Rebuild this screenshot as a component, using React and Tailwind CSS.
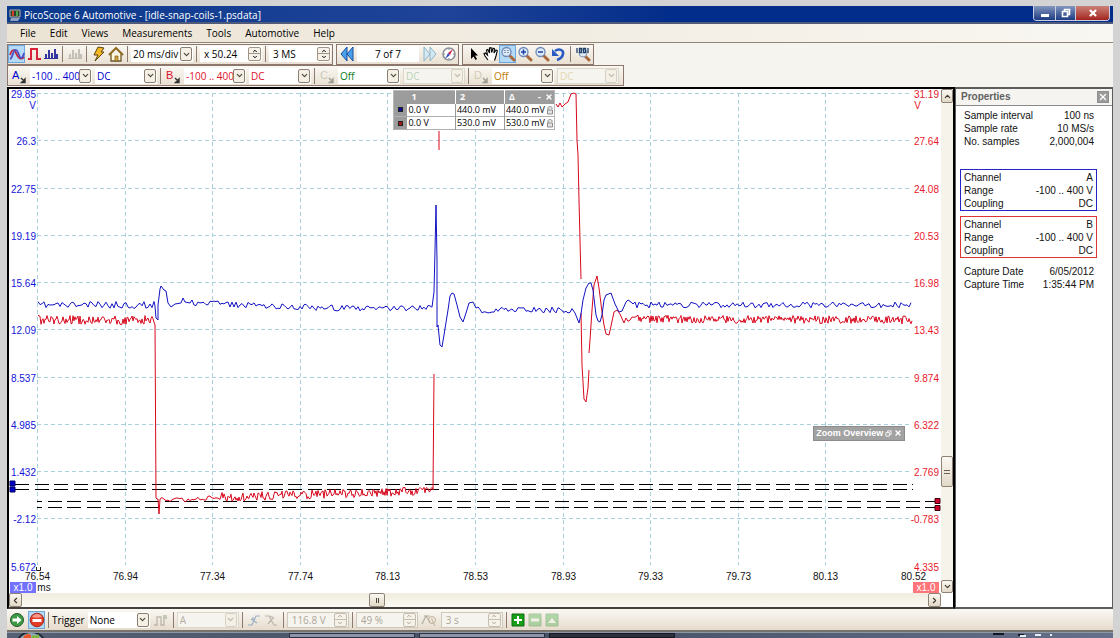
/**
 * PicoScope Automotive main window
 * Toolbars, scope view with two channels, and the properties panel
 */
import { ChevronDown, ChevronLeft, ChevronRight, ChevronUp, X } from 'lucide-react';

const VOLTS_A = ['29.85', '26.3', '22.75', '19.19', '15.64', '12.09', '8.537', '4.985', '1.432', '-2.12', '5.672'];
const VOLTS_B = ['31.19', '27.64', '24.08', '20.53', '16.98', '13.43', '9.874', '6.322', '2.769', '-0.783', '4.335'];
const TIMES = ['76.54', '76.94', '77.34', '77.74', '78.13', '78.53', '78.93', '79.33', '79.73', '80.13', '80.52'];

// Deterministic noise, so the traces look the same on each render
const makeNoise = (seed) => {
  let s = seed;
  return () => {
    s = (s * 16807) % 2147483647;
    return s / 2147483647 - 0.5;
  };
};

const noisy = (x1, y1, x2, y2, amp, step, seed) => {
  const rand = makeNoise(seed);
  const points = [];
  for (let x = x1; x <= x2; x += step) {
    const y = y1 + ((y2 - y1) * (x - x1)) / (x2 - x1);
    points.push(`${x},${(y + rand() * amp).toFixed(1)}`);
  }
  return points.join(' ');
};

const TRACE_A = [
  noisy(38, 305, 154, 305, 7, 2, 11),
  '155,306 156,318 158,320 158,305 160,289 161,286 164,290 166,291 168,303 171,307 175,304 181,303 183,298 185,302 190,303',
  noisy(192, 303, 330, 308, 6, 2, 29),
  noisy(332, 308, 432, 308, 6, 2, 37),
  '434,292 435,250 436,205 437,260 437,327 438,325 440,345 442,347 444,335 448,310 450,296 452,293 454,294 457,305 460,317 463,322 466,313 469,303 473,302 476,308',
  noisy(478, 310, 572, 310, 6, 2, 41),
  '575,313 579,323 581,314 583,300 586,288 589,283 591,283 593,290 596,315 598,321 600,322 602,315 604,300 606,295 611,293 615,304 619,312 622,311 626,302 628,300 631,302 633,304',
  noisy(635, 305, 912, 305, 6, 2, 53),
].join(' ');

const TRACES_B = [
  [noisy(38, 320, 154, 320, 9, 1, 61), '155,325 156,498 157,499 158,499 159,514 160,499', noisy(162, 500, 220, 498, 5, 2, 71), noisy(222, 497, 432, 491, 9, 1, 73), '433,490 434,374'].join(' '),
  '439,131 439,150',
  '556,104 558,107 560,103 562,107 565,104 568,102 571,94 574,93 576,94 577,140 578,155 579,200 580,240 581,279',
  '581,313 582,365 584,399 586,402 588,388 589,370',
  ['589,353 590,340 592,310 594,285 597,276 599,288 602,312 604,325 606,334 609,335 611,326 614,312 617,310 620,314 624,323', noisy(626, 320, 636, 318, 4, 2, 83), noisy(638, 319, 912, 320, 8, 1, 89)].join(' '),
];

/* ---------- Icons ---------- */

const Icon = ({ children, className = '' }) => (
  <svg viewBox="0 0 16 16" className={`size-4 shrink-0 ${className}`} fill="none" aria-hidden="true">
    {children}
  </svg>
);

const WaveIcon = () => (
  <Icon>
    <path d="M1 9C3 3 5 3 7 7s4 8 8 4" stroke="#c22643" strokeWidth="1.8" />
    <path d="M1 13c3-1 3-10 6-9s3 8 5 8 2-2 3-5" stroke="#4a52c8" strokeWidth="1.8" />
  </Icon>
);

const PulseIcon = () => (
  <Icon>
    <path d="M2 13h3V3h6v10h4" stroke="#d8233a" strokeWidth="2" />
  </Icon>
);

const BarsIcon = ({ color }) => (
  <Icon>
    <path d="M1 12.500h14" stroke={color} />
    <path d="M3 12V8M6 12V4M9 12V7M12 12V3M14 12V8" stroke={color} strokeWidth="1.9" />
  </Icon>
);

const BoltIcon = () => (
  <Icon>
    <path d="M7 1l6 1-3 4h3L4 15l3-6H3z" fill="#f5b822" stroke="#5b4310" />
  </Icon>
);

const HomeIcon = () => (
  <Icon>
    <path d="M3 8v7h10V8" fill="#fff7dc" stroke="#6d5426" strokeWidth="1.3" />
    <path d="M1 9l7-7 7 7" stroke="#8f6b1f" strokeWidth="2" />
    <path d="M7 10h3v5H7z" fill="#d8a73a" stroke="#6d5426" strokeWidth=".7" />
  </Icon>
);

const RewindIcon = ({ flip, from, edge }) => (
  <Icon className={flip ? 'rotate-180' : ''}>
    <path d="M8 1v14L2 8zM14 1v14L8 8z" fill={from} stroke={edge} />
  </Icon>
);

const CompassIcon = () => (
  <Icon>
    <circle cx="8" cy="8" r="6" fill="#fff" stroke="#8c9099" strokeWidth="1.6" />
    <path d="M12 3L9 9 7 7z" fill="#d32648" />
    <path d="M4 13l3-6 2 2z" fill="#3b55c9" />
    <path d="M8 3v1M8 12v1M3 8h1M12 8h1" stroke="#777" />
  </Icon>
);

const CursorIcon = () => (
  <Icon>
    <path d="M5 2v11l2.500-2.500L9.500 14l1.500-1-2-3.500h3z" fill="#000" />
  </Icon>
);

const HandIcon = () => (
  <Icon>
    <path
      d="M5 14L2 10 1 7.500l1.500-.5L4.500 9 3.500 4l1.300-.6L6.500 7 6.500 2 8 1.700 8.700 6.500 10 2.200l1.400.4L11 7l2-3 1.300.7L13 10l-1.500 4.500"
      fill="#fff"
      stroke="#000"
      strokeWidth="1.1"
    />
  </Icon>
);

const LensIcon = ({ children }) => (
  <Icon>
    <path d="M9 9l5 5" stroke="#a8683c" strokeWidth="3" strokeLinecap="round" />
    <circle cx="6.500" cy="6" r="4.500" fill="#dceaf8" stroke="#7089b5" strokeWidth="1.300" />
    {children}
  </Icon>
);

const UndoIcon = () => (
  <Icon>
    <path d="M4 5c4-3 9-1 8 3-.5 3-3 5-6 6" stroke="#2d5bc4" strokeWidth="2.600" />
    <path d="M1 3v7h7z" fill="#2d5bc4" />
  </Icon>
);

const Zoom100Icon = () => (
  <Icon>
    <path d="M9 9l5 5" stroke="#a8683c" strokeWidth="3" strokeLinecap="round" />
    <circle cx="8" cy="7" r="4" fill="#dfeaf5" stroke="#8196b8" />
    <path d="M2 2v5M4.500 2.500h2v4h-2zM8.500 2.500h2v4h-2zM13 2v5" stroke="#1f3f66" strokeWidth="1.300" />
  </Icon>
);

// Channel letter with the small probe at its foot
const ChannelIcon = ({ letter, color, faded }) => (
  <Icon className={faded ? 'opacity-40' : ''}>
    <text x="1" y="11" fontSize="11" fill={color} fontFamily="Liberation Sans, sans-serif">
      {letter}
    </text>
    <path d="M10 10l4 4M14 11v3.500h-3.500z" stroke="#333" fill="#333" strokeWidth="1.400" />
  </Icon>
);

const EdgeIcon = () => (
  <Icon className="opacity-50">
    <path d="M1 13h3V5h4v8h3V5h3" stroke="#8d8878" strokeWidth="1.300" />
    <path d="M10 3h4v4h-4z" fill="#96a08c" />
  </Icon>
);

const SlopeIcon = ({ falling }) => (
  <Icon className={falling ? 'opacity-50' : 'opacity-70'}>
    {falling ? (
      <path d="M2 4h4l5 9h3M5 12l5-6M7 4l4 2" stroke="#8a8578" strokeWidth="1.200" />
    ) : (
      <path d="M2 13h4l4-9h4M5 7l6 4M7 5v4" stroke="#7796bd" strokeWidth="1.200" />
    )}
  </Icon>
);

const DelayIcon = () => (
  <Icon className="opacity-60">
    <path d="M1 12l4-8 4 6M3 4h6" stroke="#8f8a7a" strokeWidth="1.200" />
    <circle cx="11" cy="8" r="3.500" stroke="#a09070" />
    <path d="M11 6v2l3 6" stroke="#a09070" />
  </Icon>
);

const GoIcon = () => (
  <Icon>
    <circle cx="8" cy="8" r="6.500" fill="#3c9a45" stroke="#24592a" />
    <path d="M3.500 6.500H8V4l4.500 4L8 12V9.500H3.500z" fill="#fff" />
  </Icon>
);

const StopIcon = () => (
  <Icon>
    <circle cx="8" cy="8" r="6.800" fill="#e23a25" stroke="#a62a1c" />
    <path d="M3 5c2-4 8-4 10 0-3 1-7 1-10 0z" fill="#f59a8c" />
    <path d="M3.500 7h9v3h-9z" fill="#fff" />
  </Icon>
);

const GreenBox = ({ faded, children }) => (
  <Icon className={faded ? 'opacity-30' : ''}>
    <path d="M2 2h12v12H2z" fill="#17a017" stroke="#0a6b0f" />
    {children}
  </Icon>
);

/* ---------- Controls ---------- */

const ToolButton = ({ label, active, disabled, children }) => (
  <button
    type="button"
    aria-label={label}
    disabled={disabled}
    className={`flex h-[18px] w-[17px] shrink-0 items-center justify-center ${active ? 'border border-[#6fa9dc] bg-[#b5daf8]' : ''}`}
  >
    {children}
  </button>
);

const Divider = () => <span className="h-4 w-px shrink-0 bg-[#8d7a70]" />;

const Select = ({ label, value, color = 'text-black', disabled }) => (
  <label className={`relative flex h-4 w-[62px] shrink-0 items-center ${disabled ? 'border border-[#ddd8cc] bg-[#f6f4ee]' : 'bg-white'}`}>
    <select
      aria-label={label}
      disabled={disabled}
      className={`h-full w-full appearance-none bg-transparent pl-[2px] outline-none ${color}`}
    >
      <option>{value}</option>
    </select>
    <span
      className={`pointer-events-none absolute right-px flex h-[14px] w-3 items-center justify-center rounded-[2px] border bg-[#f4f0e6] ${disabled ? 'border-[#d6d1c4] text-[#bcb7aa]' : 'border-[#8a7f70] text-[#4a4238]'}`}
    >
      <ChevronDown size={9} strokeWidth={3} />
    </span>
  </label>
);

const Spinner = ({ label, value, disabled }) => (
  <div className={`flex h-4 w-[62px] shrink-0 items-center pr-px ${disabled ? 'border border-[#cfc9bc] bg-[#f6f4ee] text-[#aca79a]' : 'bg-white'}`}>
    <input aria-label={label} defaultValue={value} disabled={disabled} className="w-full min-w-0 bg-transparent pl-1 outline-none" />
    <span className={`flex w-[13px] shrink-0 flex-col divide-y rounded-[2px] border bg-[#f6f2ea] ${disabled ? 'divide-[#c5bfb2] border-[#c5bfb2]' : 'divide-[#a09484] border-[#a09484]'}`}>
      <button type="button" aria-label={`Increase ${label}`} disabled={disabled} className="flex h-[6px] items-center justify-center">
        <ChevronUp size={6} strokeWidth={4} />
      </button>
      <button type="button" aria-label={`Decrease ${label}`} disabled={disabled} className="flex h-[6px] items-center justify-center">
        <ChevronDown size={6} strokeWidth={4} />
      </button>
    </span>
  </div>
);

const ToolGroup = ({ children, className = '' }) => (
  <div className={`flex h-[21px] items-center border border-[#8d766c] bg-gradient-to-b from-[#faf8f3] to-[#e9e0d2] ${className}`}>
    {children}
  </div>
);

const ScrollButton = ({ label, className, children }) => (
  <button
    type="button"
    aria-label={label}
    className={`flex shrink-0 items-center justify-center rounded-[2px] border border-[#8d8274] bg-gradient-to-b from-[#fbf8f2] to-[#e2d9c8] text-[#3c342a] ${className}`}
  >
    {children}
  </button>
);

/* ---------- Title and menu ---------- */

const TitleBar = () => (
  <header className="flex h-[18px] items-start border-b-2 border-[#4f5b78] bg-gradient-to-r from-[#0a3a8c] via-[#1e4398] via-40% to-[#032d8a] to-60% text-white">
    <svg viewBox="0 0 12 12" className="mt-[3px] ml-[2px] size-3" aria-hidden="true">
      <path d="M1 1h10v7H1z" fill="#28422f" stroke="#b8b2b0" />
      <path d="M3 2h2v5H3z" fill="#d83a2e" />
      <path d="M7 2h2v5H7z" fill="#4ea64a" />
      <path d="M2 9h9l-2 3H1z" fill="#8fa2bd" />
    </svg>
    <h1 className="ml-[3px] text-[10px] leading-[18px] font-medium">PicoScope 6 Automotive - [idle-snap-coils-1.psdata]</h1>
    <div className="mr-[3px] ml-auto flex h-[15px] overflow-hidden rounded-b-[4px] border border-t-0 border-[#c8d0e0]">
      <button type="button" aria-label="Minimize" className="flex w-[22px] items-end justify-center border-r border-[#c8d0e0] bg-gradient-to-b from-[#8496bd] to-[#1f3b83] pb-[3px]">
        <span className="h-[3px] w-2 bg-white" />
      </button>
      <button type="button" aria-label="Restore" className="flex w-5 items-center justify-center border-r border-[#c8d0e0] bg-gradient-to-b from-[#8496bd] to-[#1f3b83]">
        <svg viewBox="0 0 10 10" className="size-[10px]" aria-hidden="true">
          <path d="M3.500 3V1.500h5v5H7M1.500 3.500h5v5h-5z" fill="none" stroke="#fff" strokeWidth="1.600" />
        </svg>
      </button>
      <button type="button" aria-label="Close" className="flex w-[33px] items-center justify-center bg-gradient-to-b from-[#c98078] to-[#a3201d]">
        <X size={10} strokeWidth={5} />
      </button>
    </div>
  </header>
);

const MenuBar = () => (
  <nav className="flex h-[19px] items-center gap-[14px] border-b border-[#8f8478] bg-gradient-to-r from-[#ebe3d4] to-[#f9f7f2] pl-[13px]">
    {['File', 'Edit', 'Views', 'Measurements', 'Tools', 'Automotive', 'Help'].map((item) => (
      <button key={item} type="button">
        {item}
      </button>
    ))}
  </nav>
);

/* ---------- Toolbars ---------- */

const MainToolbar = () => (
  <div className="flex h-[22px] items-center gap-[3px]">
    <ToolGroup className="gap-[3px] pr-px">
      <div className="flex">
        <ToolButton label="Scope mode" active><WaveIcon /></ToolButton>
        <ToolButton label="Persistence mode"><PulseIcon /></ToolButton>
        <ToolButton label="Spectrum mode"><BarsIcon color="#2c2f9c" /></ToolButton>
      </div>
      <Divider />
      <ToolButton label="Auto setup" disabled><BarsIcon color="#c2bdb6" /></ToolButton>
      <Divider />
      <div className="flex">
        <ToolButton label="Automatic"><BoltIcon /></ToolButton>
        <ToolButton label="Home"><HomeIcon /></ToolButton>
      </div>
      <Divider />
      <Select label="Timebase" value="20 ms/div" />
      <Divider />
      <Spinner label="Zoom factor" value="x 50.24" />
      <Divider />
      <Spinner label="Samples" value="3 MS" />
    </ToolGroup>
    <ToolGroup className="gap-[2px] px-px">
      <ToolButton label="First buffer"><RewindIcon from="#4aa0ea" edge="#164fa0" /></ToolButton>
      <input aria-label="Buffer" defaultValue="7 of 7" className="h-4 w-[62px] bg-white text-center outline-none" />
      <ToolButton label="Last buffer"><RewindIcon flip from="#d3e8f0" edge="#8fb5ca" /></ToolButton>
      <ToolButton label="Buffer navigator"><CompassIcon /></ToolButton>
    </ToolGroup>
    <ToolGroup className="gap-[3px] px-[2px]">
      <div className="flex">
        <ToolButton label="Select"><CursorIcon /></ToolButton>
        <ToolButton label="Pan"><HandIcon /></ToolButton>
        <ToolButton label="Window zoom" active>
          <LensIcon><path d="M5 4v4M8 4v4" stroke="#2f4b80" strokeDasharray="1 1" /></LensIcon>
        </ToolButton>
        <ToolButton label="Zoom in">
          <LensIcon><path d="M4 6h5M6.500 3.500v5" stroke="#1f3ea8" strokeWidth="1.500" /></LensIcon>
        </ToolButton>
        <ToolButton label="Zoom out">
          <LensIcon><path d="M4 6h5" stroke="#1f3ea8" strokeWidth="1.500" /></LensIcon>
        </ToolButton>
        <ToolButton label="Undo zoom"><UndoIcon /></ToolButton>
      </div>
      <Divider />
      <ToolButton label="Zoom 100"><Zoom100Icon /></ToolButton>
    </ToolGroup>
  </div>
);

const CHANNELS = [
  { letter: 'A', range: '-100 .. 400', color: 'text-[#0000d0]', ink: '#0000d0' },
  { letter: 'B', range: '-100 .. 400', color: 'text-[#e0102a]', ink: '#e0102a' },
  { letter: 'C', range: 'Off', color: 'text-[#0d7d1b]', ink: '#8c9a80', off: true, faint: 'text-[#b9d3b9]' },
  { letter: 'D', range: 'Off', color: 'text-[#c07d00]', ink: '#a09a70', off: true, faint: 'text-[#e2d8b4]' },
];

const ChannelToolbar = () => (
  <div className="flex h-[22px] items-center pb-px">
    <ToolGroup className="gap-[3px] pr-1 pl-[2px]">
      {CHANNELS.map(({ letter, range, color, ink, off, faint }, i) => (
        <div key={letter} className="flex items-center gap-[3px]">
          {i > 0 && <Divider />}
          <ToolButton label={`Channel ${letter} options`} disabled={off}>
            <ChannelIcon letter={letter} color={ink} faded={off} />
          </ToolButton>
          <Select label={`Channel ${letter} range`} value={range} color={color} />
          <Select label={`Channel ${letter} coupling`} value="DC" color={off ? faint : color} disabled={off} />
        </div>
      ))}
    </ToolGroup>
  </div>
);

const TriggerBar = () => (
  <footer className="flex h-[23px] items-center gap-[3px] border-b-2 border-[#77726c] bg-gradient-to-b from-[#faf8f4] to-[#e6dccd] pl-px">
    <ToolButton label="Go"><GoIcon /></ToolButton>
    <ToolButton label="Stop" active><StopIcon /></ToolButton>
    <Divider />
    <span>Trigger</span>
    <Select label="Trigger mode" value="None" />
    <ToolButton label="Advanced trigger" disabled><EdgeIcon /></ToolButton>
    <Divider />
    <Select label="Trigger source" value="A" color="text-[#b3aea2]" disabled />
    <Divider />
    <div className="flex">
      <ToolButton label="Rising edge" disabled><SlopeIcon /></ToolButton>
      <ToolButton label="Falling edge" disabled><SlopeIcon falling /></ToolButton>
    </div>
    <Divider />
    <Spinner label="Threshold" value="116.8 V" disabled />
    <Divider />
    <Spinner label="Pre-trigger" value="49 %" disabled />
    <ToolButton label="Delay" disabled><DelayIcon /></ToolButton>
    <Spinner label="Post-trigger" value="3 s" disabled />
    <Divider />
    <div className="flex">
      <ToolButton label="Add measurement"><GreenBox><path d="M8 4v8M4 8h8" stroke="#fff" strokeWidth="2" /></GreenBox></ToolButton>
      <ToolButton label="Delete measurement" disabled><GreenBox faded><path d="M4 8h8" stroke="#fff" strokeWidth="3" /></GreenBox></ToolButton>
      <ToolButton label="Edit measurement" disabled><GreenBox faded><path d="M4 11l4-5 4 5z" fill="#fff" /></GreenBox></ToolButton>
    </div>
  </footer>
);

/* ---------- Scope view ---------- */

const gridX = (i) => Math.round(37 + i * 87.6) + 0.5;
const gridY = (i) => Math.round(93 + i * 47.25) + 0.5;

const ScopeChart = () => (
  <svg viewBox="9 89 932 504" className="block h-auto w-full bg-white" fontSize="10" fontFamily="Liberation Sans, sans-serif" role="img" aria-label="Scope traces">
    <g stroke="#a9d0dc" strokeDasharray="4 3" fill="none">
      {TIMES.slice(0, 10).map((t, i) => (
        <path key={t} d={`M${gridX(i)} 93V565`} />
      ))}
      {VOLTS_A.slice(0, 10).map((v, i) => (
        <path key={v} d={`M37 ${gridY(i)}H912`} />
      ))}
    </g>

    {/* Axis labels */}
    <g fill="#1414d8" textAnchor="end">
      {VOLTS_A.map((v, i) => (
        <text key={v} x="36" y={gridY(i) + 4}>{v}</text>
      ))}
      <text x="36" y="109">V</text>
    </g>
    <g fill="#e8182c" textAnchor="end">
      {VOLTS_B.map((v, i) => (
        <text key={v} x="939" y={gridY(i) + 4}>{v}</text>
      ))}
      <text x="921" y="109">V</text>
    </g>
    <g fill="#111" textAnchor="middle">
      {TIMES.map((t, i) => (
        <text key={t} x={gridX(i)} y="580">{t}</text>
      ))}
      <text x="44" y="591">ms</text>
    </g>
    <path d="M36.500 567v3.500h4V567" fill="none" stroke="#222" />

    {/* Ruler lines */}
    <g stroke="#000" strokeDasharray="14 5.500" shapeRendering="crispEdges">
      <path d="M15 484.500H913M15 489.500H913" />
      <path d="M37 501.500H936M37 507.500H936" strokeDashoffset="9" />
    </g>

    {/* Traces */}
    <g fill="none" strokeWidth="1">
      {TRACES_B.map((points) => (
        <polyline key={points} points={points} stroke="#d8081c" />
      ))}
      <polyline points={TRACE_A} stroke="#1212c4" />
    </g>

    {/* Ruler handles */}
    <path d="M10 481h5v5h-5zM10 487h5v5h-5z" fill="#0000c8" stroke="#00006a" />
    <path d="M935 498.500h5v5h-5zM935 505.500h5v5h-5z" fill="#d0002a" stroke="#3a0010" />

    <path d="M10 582h26v11H10z" fill="#7272ff" />
    <path d="M913 582h26v11H913z" fill="#ff7478" />
    <g fill="#fff" textAnchor="middle">
      <text x="23" y="591">x1.0</text>
      <text x="926" y="591">x1.0</text>
    </g>
  </svg>
);

const RULERS = [
  { color: 'bg-[#0c0c98]', first: '0.0 V', second: '440.0 mV', delta: '440.0 mV' },
  { color: 'bg-[#a01818]', first: '0.0 V', second: '530.0 mV', delta: '530.0 mV' },
];

const LockIcon = () => (
  <svg viewBox="0 0 8 10" className="ml-auto h-[10px] w-2 shrink-0" aria-hidden="true">
    <path d="M2 5V3c0-2 4-2 4 0v1M1.500 5h5v4h-5z" fill="#e4e4e4" stroke="#8b8b8b" />
  </svg>
);

const RulerLegend = () => (
  <table className="absolute top-px left-[41.2%] w-[162px] table-fixed border border-[#b9b9b9] bg-white text-[9px] leading-[12px]">
    <thead className="bg-[#9c9c9c] text-left text-white">
      <tr className="h-[13px]">
        <th className="w-[14px]" aria-label="Channel" />
        <th className="w-[48px] pl-1">1</th>
        <th className="w-[49px] border-l border-white pl-1">2</th>
        <th className="border-l border-white pl-1">
          <span className="flex items-center gap-1 pr-px">
            Δ
            <button type="button" aria-label="Collapse rulers" className="ml-auto">-</button>
            <button type="button" aria-label="Close rulers"><X size={8} strokeWidth={4} /></button>
          </span>
        </th>
      </tr>
    </thead>
    <tbody>
      {RULERS.map(({ color, first, second, delta }) => (
        <tr key={second} className="h-[13px] border-b border-[#b0b0b0]">
          <td className="bg-[#9c9c9c]"><span className={`mx-auto block size-[3px] outline outline-[#222] ${color}`} /></td>
          <td className="pl-px">{first}</td>
          <td className="border-l border-[#999] pl-px">{second}</td>
          <td className="border-l border-[#999] pl-px"><span className="flex items-center">{delta}<LockIcon /></span></td>
        </tr>
      ))}
    </tbody>
  </table>
);

const ZoomOverview = () => (
  <div className="absolute top-[66.8%] left-[86.3%] flex h-[15px] items-center gap-[2px] border border-[#8c8c8c] bg-[#a2a2a2] px-[2px] font-['Liberation_Sans',sans-serif] text-[9px] leading-[13px] font-bold text-white">
    <span className="whitespace-nowrap">Zoom Overview</span>
    <button type="button" aria-label="Restore overview">
      <svg viewBox="0 0 8 8" className="size-[7px]" aria-hidden="true">
        <path d="M3 3V1h4v4H5M1 3h4v4H1z" fill="none" stroke="#fff" />
      </svg>
    </button>
    <button type="button" aria-label="Close overview"><X size={8} strokeWidth={4} /></button>
  </div>
);

const ScopeView = () => (
  <main className="min-w-0 flex-1 border-2 border-black border-b-[#44403c] bg-white">
    <div className="flex">
      <div className="relative min-w-0 flex-1">
        <ScopeChart />
        <RulerLegend />
        <ZoomOverview />
      </div>
      <div className="flex w-3 flex-col bg-[#f6f3ea]">
        <ScrollButton label="Scroll up" className="h-[14px]"><ChevronUp size={9} strokeWidth={3} /></ScrollButton>
        <div className="grow-[355]" />
        <ScrollButton label="Vertical scroll position" className="h-[31px] flex-col gap-[2px]">
          <span className="h-px w-[6px] bg-[#6a6054]" />
          <span className="h-px w-[6px] bg-[#6a6054]" />
        </ScrollButton>
        <div className="grow-[93]" />
        <ScrollButton label="Scroll down" className="h-[13px]"><ChevronDown size={9} strokeWidth={3} /></ScrollButton>
      </div>
    </div>
    <div className="mr-3 flex h-[14px] bg-gradient-to-b from-[#f1ecdf] to-[#faf9f3]">
      <ScrollButton label="Scroll left" className="w-[13px]"><ChevronLeft size={9} strokeWidth={3} /></ScrollButton>
      <div className="grow-[347]" />
      <ScrollButton label="Horizontal scroll position" className="w-4 gap-px">
        <span className="h-[5px] w-px bg-[#4a4238]" />
        <span className="h-[5px] w-px bg-[#4a4238]" />
      </ScrollButton>
      <div className="grow-[543]" />
      <ScrollButton label="Scroll right" className="w-[13px]"><ChevronRight size={9} strokeWidth={3} /></ScrollButton>
    </div>
  </main>
);

/* ---------- Properties ---------- */

const PropertyList = ({ rows, className = '' }) => (
  <dl className={`px-[3px] ${className}`}>
    {rows.map(([name, value]) => (
      <div key={name} className="flex justify-between leading-[13px]">
        <dt>{name}</dt>
        <dd>{value}</dd>
      </div>
    ))}
  </dl>
);

const PropertiesPanel = () => (
  <aside className="w-[158px] shrink-0 border-t-2 border-r border-b-2 border-l border-[#5c5c5c] bg-white font-['Liberation_Sans',sans-serif]">
    <div className="flex h-[17px] items-center justify-between border-b border-[#8a8a8a] bg-[#f5f4f0] pr-[3px] pl-[5px]">
      <h2 className="text-[10px] font-bold text-[#606060]">Properties</h2>
      <button type="button" aria-label="Close properties" className="flex size-3 items-center justify-center border border-[#8e8e8e] bg-[#9c9c9c] text-white">
        <X size={10} strokeWidth={3} />
      </button>
    </div>
    <div className="pt-[3px] pr-[15px] pl-1 text-[10px] text-[#111]">
      <PropertyList className="pl-1" rows={[['Sample interval', '100 ns'], ['Sample rate', '10 MS/s'], ['No. samples', '2,000,004']]} />
      <PropertyList
        className="mt-[21px] border border-[#2424c8] pt-px"
        rows={[['Channel', 'A'], ['Range', '-100 .. 400 V'], ['Coupling', 'DC']]}
      />
      <PropertyList
        className="mt-[5px] border border-[#e03434] pt-px"
        rows={[['Channel', 'B'], ['Range', '-100 .. 400 V'], ['Coupling', 'DC']]}
      />
      <PropertyList className="mt-[7px] pl-1" rows={[['Capture Date', '6/05/2012'], ['Capture Time', '1:35:44 PM']]} />
    </div>
  </aside>
);

/* ---------- Taskbar ---------- */

const Taskbar = () => (
  <div className="relative flex h-[6px] gap-1 overflow-hidden border-t border-[#8f97a5] bg-gradient-to-r from-[#566074] via-[#454f64] to-[#66708a] pl-[282px]">
    <svg viewBox="0 0 32 32" className="absolute top-[-2px] left-[8px] size-8" aria-hidden="true">
      <circle cx="16" cy="16" r="15" fill="#8fa9ba" stroke="#1c2733" strokeWidth="2" />
      <path d="M8 7c2-4 5-5 8-3v6c-3-1-5-1-8 1z" fill="#e8562a" />
      <path d="M17 4c2 1 5 1 7-1v7c-3 1-5 1-7 0z" fill="#7cb83c" />
    </svg>
    <span className="h-full w-[126px] border border-[#2b3140] bg-[#8d96a8]" />
    <span className="h-full w-[126px] border border-[#2b3140] bg-[#8d96a8]" />
    <span className="h-full w-[126px] border border-[#151922] bg-[#2b303c]" />
    <svg viewBox="0 0 64 4" className="mr-[56px] ml-auto h-1 w-16" aria-hidden="true">
      <path d="M0 1h11M25 2h6" stroke="#111722" strokeWidth="2" />
      <path d="M27 3h6M42 2h6M57 2h2" stroke="#e8edf5" strokeWidth="2" />
    </svg>
  </div>
);

const App = () => (
  <div className="overflow-hidden bg-[#d3d3d3] px-[7px] pt-[6px] font-['Open_Sans','Liberation_Sans',sans-serif] text-[10px] leading-[14px] text-black">
    <TitleBar />
    <MenuBar />
    <div className="bg-[#f5f4ef]">
      <MainToolbar />
      <ChannelToolbar />
    </div>
    <div className="flex">
      <ScopeView />
      <PropertiesPanel />
    </div>
    <TriggerBar />
    <Taskbar />
  </div>
);

export default App;
